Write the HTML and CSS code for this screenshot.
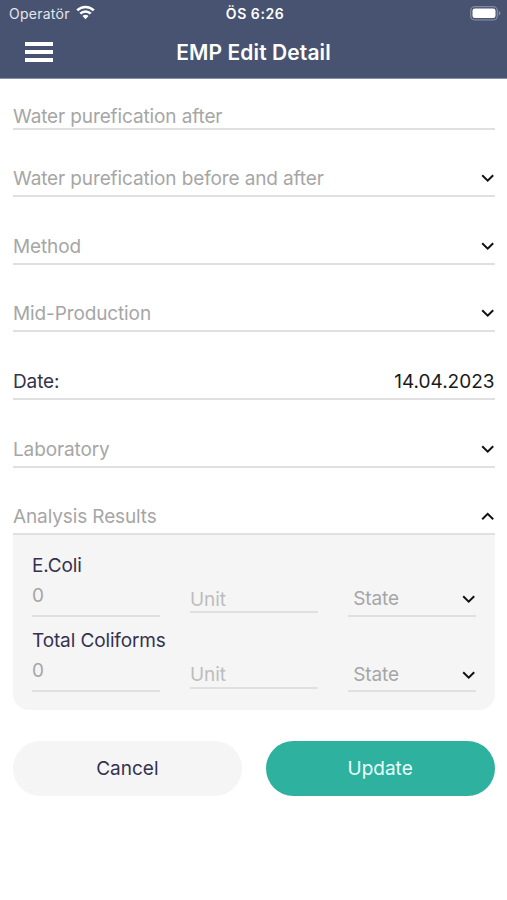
FILE: index.html
```html
<!DOCTYPE html>
<html lang="en">
<head>
<meta charset="utf-8">
<title>EMP Edit Detail</title>
<link rel="stylesheet" href="styles.css">
</head>
<body>
<svg class="defs" width="0" height="0" aria-hidden="true">
  <symbol id="down" viewBox="0 0 14 10"><path d="M1.2 2.2 6.7 7.6l5.5-5.4" fill="none" stroke="currentColor" stroke-width="2"/></symbol>
  <symbol id="up" viewBox="0 0 14 10"><path d="M1.2 8.3 6.7 2.9l5.5 5.4" fill="none" stroke="currentColor" stroke-width="2"/></symbol>
</svg>
<header class="header">
  <div class="status">
    <div class="carrier"><span>Operatör</span>
      <svg width="19" height="15" viewBox="0 0 19 15"><g fill="none" stroke="#fff" stroke-width="2.6"><path d="M1.2 5.4a11.8 11.8 0 0 1 16.6 0"/><path d="M4.3 8.7a7.4 7.4 0 0 1 10.4 0"/></g><path d="M9.5 14.2 6.5 11.1a4.2 4.2 0 0 1 6 0z" fill="#fff"/></svg>
    </div>
    <div class="clock">ÖS 6:26</div>
    <div class="battery"><svg width="31" height="15" viewBox="0 0 31 15"><rect x=".7" y=".7" width="26.6" height="13.2" rx="4" fill="none" stroke="#8289a0" stroke-width="1.3"/><rect x="2.5" y="2.5" width="23" height="9.6" rx="2.3" fill="#fff"/><path d="M28.7 5v4.6c1.2-.5 1.8-1.3 1.8-2.3s-.6-1.8-1.8-2.3z" fill="#8289a0"/></svg></div>
  </div>
  <div class="bar">
    <div class="menu"><i></i><i></i><i></i></div>
    <h1 class="title">EMP Edit Detail</h1>
  </div>
</header>
<main class="form">
  <div class="field field-first"><span>Water purefication after</span></div>
  <div class="field"><span>Water purefication before and after</span><svg class="chev"><use href="#down"/></svg></div>
  <div class="field"><span>Method</span><svg class="chev"><use href="#down"/></svg></div>
  <div class="field"><span>Mid-Production</span><svg class="chev"><use href="#down"/></svg></div>
  <div class="field"><span class="label">Date:</span><span class="date">14.04.2023</span></div>
  <div class="field"><span>Laboratory</span><svg class="chev"><use href="#down"/></svg></div>
  <div class="field"><span>Analysis Results</span><svg class="chev"><use href="#up"/></svg></div>
  <section class="panel">
    <div class="result">
      <div class="name">E.Coli</div>
      <div class="inputs">
        <div class="value">0</div>
        <div class="unit">Unit</div>
        <div class="state"><span>State</span><svg class="chev"><use href="#down"/></svg></div>
      </div>
    </div>
    <div class="result">
      <div class="name total">Total Coliforms</div>
      <div class="inputs">
        <div class="value">0</div>
        <div class="unit">Unit</div>
        <div class="state"><span>State</span><svg class="chev"><use href="#down"/></svg></div>
      </div>
    </div>
  </section>
  <div class="actions">
    <button class="btn">Cancel</button>
    <button class="btn primary">Update</button>
  </div>
</main>
</body>
</html>
```
FILE: styles.css
```css
* { box-sizing: border-box; }
body {
  margin: 0;
  background: #fff;
  font-family: Inter, "Liberation Sans", sans-serif;
  font-size: 19px;
  line-height: 24px;
  letter-spacing: -0.12px;
  color: #a6a6a6;
}
svg { display: block; }
.defs { position: absolute; }
.header {
  height: 79px;
  background: #475370;
  border-bottom: 1px solid #7f92a6;
  color: #fff;
}
.status {
  display: grid;
  grid-template-columns: 1fr auto 1fr;
  align-items: center;
  height: 27px;
  padding: 0 6px 0 9px;
  font-size: 14px;
}
.carrier { display: flex; align-items: center; gap: 6px; color: #e3e6ed; letter-spacing: 0.25px; }
.carrier svg { margin-top: -2px; }
.clock { font-size: 14px; font-weight: 600; letter-spacing: 0.55px; }
.battery { display: flex; justify-content: flex-end; }
.bar {
  display: grid;
  grid-template-columns: 60px 1fr 60px;
  align-items: center;
  height: 50px;
}
.menu { display: flex; flex-direction: column; gap: 4px; padding-left: 25px; width: 53px; }
.menu i { height: 4px; background: #fff; }
.title {
  margin: 1px 0 0;
  text-align: center;
  font-size: 21px;
  font-weight: 600;
  letter-spacing: 0.1px;
}
.form { padding: 0 12.5px 0 13px; }
.field {
  display: flex;
  justify-content: space-between;
  align-items: flex-end;
  height: 67.67px;
  padding-bottom: 4px;
  border-bottom: 2px solid #e0e0e0;
}
.field-first { height: 50.5px; padding-bottom: 0; }
.field-first span { margin-bottom: -1px; }
.chev { width: 14px; height: 10px; color: #111; margin: 0 0 8px; }
.label, .name { color: #34324f; }
.date { color: #1a1a1a; letter-spacing: 0; }
.panel {
  height: 175px;
  padding: 18.5px 18px 0 19px;
  background: #f5f5f5;
  border-radius: 0 0 16px 16px;
}
.result { height: 75.5px; }
.name { height: 25px; }
.inputs {
  display: grid;
  grid-template-columns: repeat(3, 128.3px);
  justify-content: space-between;
  align-items: start;
}
.value { height: 38px; padding-top: 5px; border-bottom: 2px solid #e0e0e0; }
.unit { height: 34.5px; padding-top: 9px; border-bottom: 2px solid #e0e0e0; color: #bdbdbd; }
.state {
  display: flex;
  justify-content: space-between;
  height: 38px;
  padding: 8.5px 0 0 5px;
  border-bottom: 2px solid #e0e0e0;
}
.state .chev { margin-top: 7px; }
.actions { display: grid; grid-template-columns: 1fr 1fr; gap: 24px; margin-top: 31px; }
.btn {
  height: 55px;
  border: 0;
  border-radius: 28px;
  background: #f5f5f5;
  color: #34324f;
  font: inherit;
  letter-spacing: 0;
}
.primary { background: #2eb19f; color: #e9fffb; }
```
